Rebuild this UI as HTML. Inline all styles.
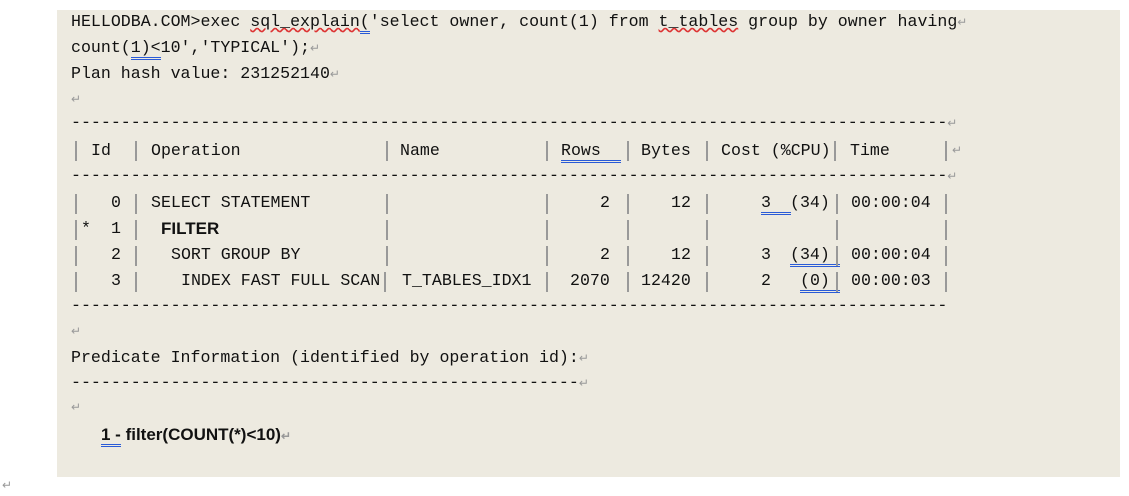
<!DOCTYPE html>
<html><head><meta charset="utf-8"><style>
body{margin:0;width:1129px;height:489px;background:#fff;position:relative;overflow:hidden;font-family:"Liberation Mono","Noto Sans CJK SC",monospace;font-size:16.6px;color:#111}
#bg{position:absolute;left:57px;top:10px;width:1063px;height:467px;background:#edeae0}
.t{position:absolute;white-space:pre;line-height:20px}
.r{position:absolute;white-space:pre;line-height:20px;text-align:right}
.p{position:absolute;width:1.5px;height:20px;background:#999}
.m{color:#999;font-size:12px}
.u{border-bottom:3px double #2a5bd7}
.b{font-family:"Liberation Sans",sans-serif;font-weight:bold}
</style></head><body>
<div id="bg"></div>
<div class="t" style="left:71px;top:12px">HELLODBA.COM&gt;exec <span style="text-decoration:underline wavy #d33">sql_explain</span><span class="u">(</span>'select owner, count(1) from <span style="text-decoration:underline wavy #d33">t_tables</span> group by owner having<span class="m">↵</span></div>
<div class="t" style="left:71px;top:38px">count(<span class="u">1)&lt;</span>10','TYPICAL');<span class="m">↵</span></div>
<div class="t" style="left:71px;top:64px">Plan hash value: 231252140<span class="m">↵</span></div>
<div class="t m" style="left:71px;top:90px">↵</div>
<div class="t" style="left:71px;top:113px">----------------------------------------------------------------------------------------<span class="m">↵</span></div>
<div class="t" style="left:91px;top:141px">Id</div>
<div class="t" style="left:151px;top:141px">Operation</div>
<div class="t" style="left:400px;top:141px">Name</div>
<div class="t" style="left:561px;top:141px"><span class="u">Rows  </span></div>
<div class="t" style="left:641px;top:141px">Bytes</div>
<div class="t" style="left:721px;top:141px">Cost (%CPU)</div>
<div class="t" style="left:850px;top:141px">Time</div>
<div class="t m" style="left:952px;top:141px">↵</div>
<div class="t" style="left:71px;top:166px">----------------------------------------------------------------------------------------<span class="m">↵</span></div>

<div class="t" style="left:111px;top:193px">0</div>
<div class="t" style="left:151px;top:193px">SELECT STATEMENT</div>
<div class="t" style="left:600px;top:193px">2</div>
<div class="t" style="left:671px;top:193px">12</div>
<div class="t" style="left:761px;top:193px"><span class="u">3  </span></div>
<div class="t" style="left:790px;top:193px">(34)</div>
<div class="t" style="left:851px;top:193px">00:00:04</div>

<div class="t" style="left:81px;top:219px">*</div>
<div class="t" style="left:111px;top:219px">1</div>
<div class="t b" style="left:161px;top:219px;font-size:17px">FILTER</div>

<div class="t" style="left:111px;top:245px">2</div>
<div class="t" style="left:171px;top:245px">SORT GROUP BY</div>
<div class="t" style="left:600px;top:245px">2</div>
<div class="t" style="left:671px;top:245px">12</div>
<div class="t" style="left:761px;top:245px">3</div>
<div class="t" style="left:790px;top:245px"><span class="u">(34) </span></div>
<div class="t" style="left:851px;top:245px">00:00:04</div>

<div class="t" style="left:111px;top:271px">3</div>
<div class="t" style="left:181px;top:271px">INDEX FAST FULL SCAN</div>
<div class="t" style="left:402px;top:271px">T_TABLES_IDX1</div>
<div class="t" style="left:570px;top:271px">2070</div>
<div class="t" style="left:641px;top:271px">12420</div>
<div class="t" style="left:761px;top:271px">2</div>
<div class="t" style="left:800px;top:271px"><span class="u">(0) </span></div>
<div class="t" style="left:851px;top:271px">00:00:03</div>

<div class="t" style="left:71px;top:296px">----------------------------------------------------------------------------------------</div>
<div class="t m" style="left:71px;top:322px">↵</div>
<div class="t" style="left:71px;top:348px">Predicate Information (identified by operation id):<span class="m">↵</span></div>
<div class="t" style="left:71px;top:373px">---------------------------------------------------<span class="m">↵</span></div>
<div class="t m" style="left:71px;top:398px">↵</div>
<div class="t b" style="left:101px;top:425px;font-size:17px"><span class="u">1 -</span> filter(COUNT(*)&lt;10)<span class="m">↵</span></div>
<div class="t m" style="left:2px;top:476px">↵</div>
<!-- pipes -->
<div class="p" style="left:75px;top:141px"></div><div class="p" style="left:135px;top:141px"></div><div class="p" style="left:386px;top:141px"></div><div class="p" style="left:546px;top:141px"></div><div class="p" style="left:627px;top:141px"></div><div class="p" style="left:706px;top:141px"></div><div class="p" style="left:834px;top:141px"></div><div class="p" style="left:945px;top:141px"></div>
<div class="p" style="left:75px;top:194px"></div><div class="p" style="left:135px;top:194px"></div><div class="p" style="left:386px;top:194px"></div><div class="p" style="left:546px;top:194px"></div><div class="p" style="left:627px;top:194px"></div><div class="p" style="left:706px;top:194px"></div><div class="p" style="left:836px;top:194px"></div><div class="p" style="left:945px;top:194px"></div>
<div class="p" style="left:75px;top:220px"></div><div class="p" style="left:135px;top:220px"></div><div class="p" style="left:386px;top:220px"></div><div class="p" style="left:546px;top:220px"></div><div class="p" style="left:627px;top:220px"></div><div class="p" style="left:706px;top:220px"></div><div class="p" style="left:836px;top:220px"></div><div class="p" style="left:945px;top:220px"></div>
<div class="p" style="left:75px;top:246px"></div><div class="p" style="left:135px;top:246px"></div><div class="p" style="left:386px;top:246px"></div><div class="p" style="left:546px;top:246px"></div><div class="p" style="left:627px;top:246px"></div><div class="p" style="left:706px;top:246px"></div><div class="p" style="left:836px;top:246px"></div><div class="p" style="left:945px;top:246px"></div>
<div class="p" style="left:75px;top:272px"></div><div class="p" style="left:135px;top:272px"></div><div class="p" style="left:384px;top:272px"></div><div class="p" style="left:546px;top:272px"></div><div class="p" style="left:627px;top:272px"></div><div class="p" style="left:706px;top:272px"></div><div class="p" style="left:836px;top:272px"></div><div class="p" style="left:945px;top:272px"></div>
</body></html>
